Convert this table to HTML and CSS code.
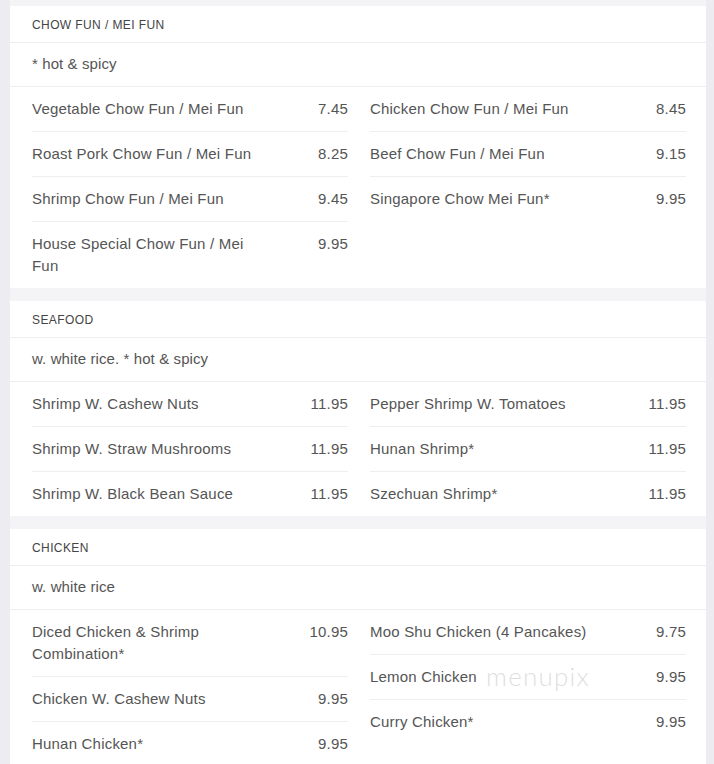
FILE: index.html
```html
<!DOCTYPE html>
<html>
<head>
<meta charset="utf-8">
<link rel="stylesheet" href="styles.css">
</head>
<body>
<div class="menu">
  <section class="sec">
    <div class="sec-head">CHOW FUN / MEI FUN</div>
    <div class="sec-note">* hot &amp; spicy</div>
    <div class="cols">
      <div class="col">
        <div class="item"><span class="name">Vegetable Chow Fun / Mei Fun</span><span class="price">7.45</span></div>
        <div class="item"><span class="name">Roast Pork Chow Fun / Mei Fun</span><span class="price">8.25</span></div>
        <div class="item"><span class="name">Shrimp Chow Fun / Mei Fun</span><span class="price">9.45</span></div>
        <div class="item"><span class="name">House Special Chow Fun / Mei Fun</span><span class="price">9.95</span></div>
      </div>
      <div class="col">
        <div class="item"><span class="name">Chicken Chow Fun / Mei Fun</span><span class="price">8.45</span></div>
        <div class="item"><span class="name">Beef Chow Fun / Mei Fun</span><span class="price">9.15</span></div>
        <div class="item"><span class="name">Singapore Chow Mei Fun*</span><span class="price">9.95</span></div>
      </div>
    </div>
  </section>
  <section class="sec">
    <div class="sec-head">SEAFOOD</div>
    <div class="sec-note">w. white rice. * hot &amp; spicy</div>
    <div class="cols">
      <div class="col">
        <div class="item"><span class="name">Shrimp W. Cashew Nuts</span><span class="price">11.95</span></div>
        <div class="item"><span class="name">Shrimp W. Straw Mushrooms</span><span class="price">11.95</span></div>
        <div class="item"><span class="name">Shrimp W. Black Bean Sauce</span><span class="price">11.95</span></div>
      </div>
      <div class="col">
        <div class="item"><span class="name">Pepper Shrimp W. Tomatoes</span><span class="price">11.95</span></div>
        <div class="item"><span class="name">Hunan Shrimp*</span><span class="price">11.95</span></div>
        <div class="item"><span class="name">Szechuan Shrimp*</span><span class="price">11.95</span></div>
      </div>
    </div>
  </section>
  <section class="sec">
    <div class="sec-head">CHICKEN</div>
    <div class="sec-note">w. white rice</div>
    <div class="cols">
      <div class="col">
        <div class="item"><span class="name">Diced Chicken &amp; Shrimp Combination*</span><span class="price">10.95</span></div>
        <div class="item"><span class="name">Chicken W. Cashew Nuts</span><span class="price">9.95</span></div>
        <div class="item"><span class="name">Hunan Chicken*</span><span class="price">9.95</span></div>
      </div>
      <div class="col">
        <div class="item"><span class="name">Moo Shu Chicken (4 Pancakes)</span><span class="price">9.75</span></div>
        <div class="item"><span class="name">Lemon Chicken</span><span class="price">9.95</span></div>
        <div class="item"><span class="name">Curry Chicken*</span><span class="price">9.95</span></div>
      </div>
    </div>
    <div class="watermark">menupix</div>
  </section>
</div>
</body>
</html>
```
FILE: styles.css
```css
html, body {
  margin: 0;
  padding: 0;
  background: #ececf1;
}
body {
  font-family: "Liberation Sans", Arial, sans-serif;
  color: #555;
  height: 764px;
  overflow: hidden;
}
.menu {
  margin-left: 10px;
  width: 696px;
  background: #f4f4f6;
  padding-top: 6px;
  display: flex;
  flex-direction: column;
  gap: 13px;
}
.sec {
  background: #fff;
  position: relative;
}
.sec-head {
  font-size: 12px;
  line-height: 16px;
  letter-spacing: 0.4px;
  padding: 11px 22px 9px;
  color: #444;
  border-bottom: 1px solid #eeeeee;
}
.sec-note {
  font-size: 15px;
  line-height: 22px;
  letter-spacing: 0.1px;
  padding: 10px 22px 11px;
  border-bottom: 1px solid #eeeeee;
}
.cols {
  display: grid;
  grid-template-columns: 316px 316px;
  column-gap: 22px;
  padding: 0 20px 0 22px;
}
.item {
  display: flex;
  font-size: 15px;
  line-height: 22px;
  letter-spacing: 0.2px;
  padding: 11px 0;
  border-bottom: 1px solid #eeeeee;
}
.item:last-child {
  border-bottom: none;
}
.name {
  flex: 1;
}
.price {
  width: 90px;
  text-align: right;
}
.watermark {
  position: absolute;
  left: 476px;
  top: 131px;
  font-family: Lato, "Open Sans", sans-serif;
  font-weight: 300;
  font-size: 26px;
  letter-spacing: 1.2px;
  color: rgba(190, 190, 190, 0.5);
  pointer-events: none;
}
```
